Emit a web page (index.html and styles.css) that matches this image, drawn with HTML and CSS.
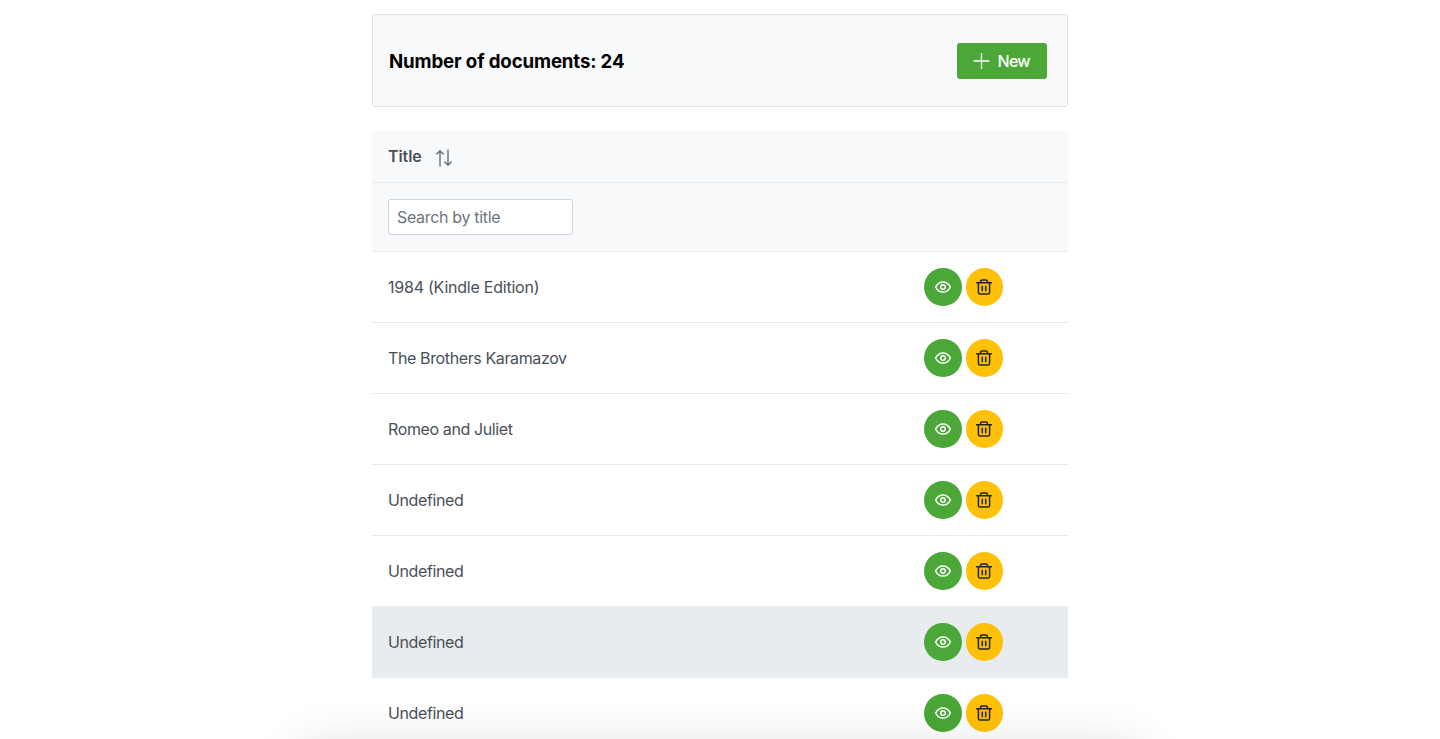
FILE: index.html
```html
<!DOCTYPE html>
<html lang="en">
<head>
<meta charset="utf-8">
<title>Documents</title>
<link rel="stylesheet" href="styles.css">
</head>
<body>
<svg class="sprite" aria-hidden="true">
  <symbol id="eye" viewBox="-0.5 -0.5 19 19"><path d="M1.2 9C3 5.4 5.8 3.6 9 3.6S15 5.4 16.8 9C15 12.6 12.2 14.4 9 14.4S3 12.6 1.2 9Z"/><circle cx="9" cy="9" r="2.4"/></symbol>
  <symbol id="trash" viewBox="-0.5 -0.5 19 19"><path d="M1.2 4.5H16.8M3.1 4.5V14.7Q3.1 16.5 4.9 16.5H13.1Q14.9 16.5 14.9 14.7V4.5M5.4 4.5V3.2Q5.4 1.6 7 1.6H11Q12.6 1.6 12.6 3.2V4.5M7.2 8.2V13M10.8 8.2V13"/></symbol>
</svg>
<main class="page">
  <header class="toolbar">
    <h1 class="toolbar-title">Number of documents: 24</h1>
    <button class="new-button"><svg class="plus" viewBox="0 0 16 16"><path d="M8 .5V15.5M.5 8H15.5"/></svg><span>New</span></button>
  </header>
  <section class="table">
    <div class="head"><span class="head-title">Title</span><svg class="sort" viewBox="0 0 18 18"><path d="M5 17V2M1.8 4.9L5 1.7L8.2 4.9M13 1V16M9.8 13.1L13 16.3L16.2 13.1"/></svg></div>
    <div class="filter"><input class="search" type="text" placeholder="Search by title"></div>
    <div class="row"><span class="name name-wide">1984 (Kindle Edition)</span><div class="actions"><button class="round view"><svg><use href="#eye"/></svg></button><button class="round delete"><svg><use href="#trash"/></svg></button></div></div>
    <div class="row"><span class="name">The Brothers Karamazov</span><div class="actions"><button class="round view"><svg><use href="#eye"/></svg></button><button class="round delete"><svg><use href="#trash"/></svg></button></div></div>
    <div class="row"><span class="name">Romeo and Juliet</span><div class="actions"><button class="round view"><svg><use href="#eye"/></svg></button><button class="round delete"><svg><use href="#trash"/></svg></button></div></div>
    <div class="row"><span class="name">Undefined</span><div class="actions"><button class="round view"><svg><use href="#eye"/></svg></button><button class="round delete"><svg><use href="#trash"/></svg></button></div></div>
    <div class="row"><span class="name">Undefined</span><div class="actions"><button class="round view"><svg><use href="#eye"/></svg></button><button class="round delete"><svg><use href="#trash"/></svg></button></div></div>
    <div class="row active"><span class="name">Undefined</span><div class="actions"><button class="round view"><svg><use href="#eye"/></svg></button><button class="round delete"><svg><use href="#trash"/></svg></button></div></div>
    <div class="row"><span class="name">Undefined</span><div class="actions"><button class="round view"><svg><use href="#eye"/></svg></button><button class="round delete"><svg><use href="#trash"/></svg></button></div></div>
  </section>
</main>
<div class="bottom-shadow"></div>
</body>
</html>
```
FILE: styles.css
```css
* { box-sizing: border-box; }
body {
  margin: 0;
  height: 739px;
  overflow: hidden;
  background: #fff;
  font: 16px/24px Inter, "Liberation Sans", sans-serif;
  color: #495057;
}
button { border: 0; padding: 0; font: inherit; }
svg { display: block; fill: none; stroke: currentColor; }
.sprite { position: absolute; width: 0; height: 0; }
.page { width: 696px; margin: 0 auto; padding-top: 14px; }
.toolbar {
  height: 93px;
  padding: 0 20px 0 16px;
  display: flex;
  align-items: center;
  justify-content: space-between;
  background: #f8f9fb;
  border: 1px solid #dee2e6;
  border-radius: 3px;
}
.toolbar-title { margin: 0; padding-top: 2px; font-size: 18.7px; font-weight: 700; letter-spacing: -0.15px; color: #000; }
.new-button {
  width: 90px;
  height: 36px;
  padding-left: 16px;
  display: flex;
  align-items: center;
  gap: 7.5px;
  background: #4aa738;
  color: #fff;
  font-weight: 500;
  letter-spacing: -0.7px;
  border-radius: 3px;
}
.plus { width: 17px; height: 16px; stroke-width: 1.3; stroke-linecap: round; }
.table { margin-top: 24px; }
.head {
  height: 52px;
  padding: 0 16px;
  display: flex;
  align-items: center;
  background: #f8f9fb;
  border-bottom: 1px solid #e9ecef;
}
.head-title { padding-bottom: 2px; font-weight: 600; letter-spacing: -0.1px; }
.sort { width: 18px; height: 18px; margin: 2px 0 0 13px; color: #6c757d; stroke-width: 1.45; stroke-linecap: round; }
.filter {
  height: 69px;
  padding: 16px;
  background: #f8f9fb;
  border-bottom: 1px solid #e9ecef;
}
.search {
  display: block;
  width: 185px;
  height: 36px;
  padding: 0 8px;
  border: 1px solid #ced4da;
  border-radius: 3px;
  background: #fff;
  font: inherit;
  letter-spacing: -0.32px;
}
.search::placeholder { color: #6c757d; opacity: 1; }
.row {
  height: 71px;
  padding: 0 65px 0 16px;
  display: flex;
  align-items: center;
  justify-content: space-between;
  border-bottom: 1px solid #e9ecef;
}
.active { background: #e9ecef; }
.name { letter-spacing: -0.38px; }
.name-wide { letter-spacing: -0.23px; }
.actions { display: flex; gap: 4px; }
.round { width: 37.5px; height: 38px; display: flex; align-items: center; justify-content: center; border-radius: 50%; }
.round svg { width: 18px; height: 18px; stroke-width: 1.6; stroke-linecap: round; stroke-linejoin: round; }
.view { background: #4aa738; color: #fff; }
.delete { background: #ffc107; color: #212529; }
.bottom-shadow {
  position: fixed;
  top: 745px;
  left: 301px;
  width: 838px;
  height: 200px;
  box-shadow: 0 0 45px rgba(0, 0, 0, .13);
}
```
